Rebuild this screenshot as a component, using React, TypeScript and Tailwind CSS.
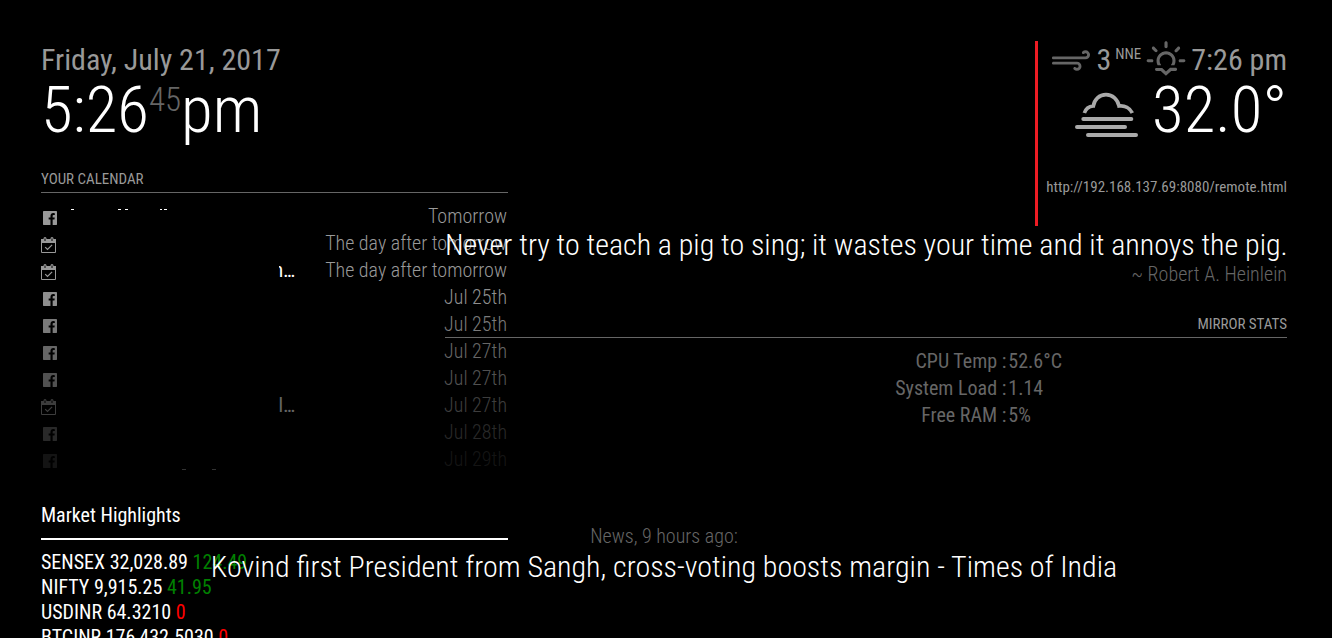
import { WiStrongWind, WiSunset } from 'react-icons/wi'

type CalendarEvent = {
  icon: 'facebook' | 'calendar'
  title: string
  time: string
}

const EVENTS: CalendarEvent[] = [
  { icon: 'facebook', title: '', time: 'Tomorrow' },
  { icon: 'calendar', title: '', time: 'The day after tomorrow' },
  { icon: 'calendar', title: 'n…', time: 'The day after tomorrow' },
  { icon: 'facebook', title: '', time: 'Jul 25th' },
  { icon: 'facebook', title: '', time: 'Jul 25th' },
  { icon: 'facebook', title: '', time: 'Jul 27th' },
  { icon: 'facebook', title: '', time: 'Jul 27th' },
  { icon: 'calendar', title: 'l…', time: 'Jul 27th' },
  { icon: 'facebook', title: '', time: 'Jul 28th' },
  { icon: 'facebook', title: '', time: 'Jul 29th' },
]

const STATS = [
  { label: 'CPU Temp :', value: '52.6°C' },
  { label: 'System Load :', value: '1.14' },
  { label: 'Free RAM :', value: '5%' },
]

const QUOTES = [
  { name: 'SENSEX', price: '32,028.89', change: '124.49', up: true },
  { name: 'NIFTY', price: '9,915.25', change: '41.95', up: true },
  { name: 'USDINR', price: '64.3210', change: '0', up: false },
  { name: 'BTCINR', price: '176,432.5030', change: '0', up: false },
]

// events fade out after the first quarter of the list
function eventOpacity(index: number) {
  const start = EVENTS.length * 0.25
  if (index < start) return 1
  return 1 - (index - start) / (EVENTS.length - start)
}

function FacebookIcon() {
  return (
    <svg viewBox="0 128 1536 1536" className="ml-0.5 size-3.5" fill="currentColor" aria-hidden="true">
      <path d="M1451 128q35 0 60 25t25 60v1366q0 35-25 60t-60 25h-391v-595h199l30-232h-229v-148q0-56 23.5-84t91.5-28l122-1v-207q-63-9-178-9-136 0-217.5 80t-81.5 226v171h-200v232h200v595h-735q-35 0-60-25t-25-60v-1366q0-35 25-60t60-25h1366z" />
    </svg>
  )
}

function CalendarIcon() {
  return (
    <svg viewBox="0 0 15 16" className="h-4 w-[15px]" fill="none" stroke="currentColor" aria-hidden="true">
      <path d="M.5 3v12.5h14V3" />
      <path d="M0 2h15v4H0z" fill="currentColor" stroke="none" />
      <path d="M4 4V1.5M11 4V1.5" strokeWidth="3" strokeLinecap="round" />
      <path d="M4 1.5v2.5M11 1.5v2.5" stroke="#000" />
      <path d="M4.2 10.2l2.3 2.3 4.6-4.6" strokeWidth="1.2" />
    </svg>
  )
}

function FogIcon() {
  return (
    <svg
      viewBox="0 0 216 168"
      className="mt-1.5 h-14 w-[72px] text-[#aaa]"
      fill="none"
      stroke="currentColor"
      aria-hidden="true"
    >
      <path
        d="M43 81C47 69 57 61 70 60C73 40 88 26 108 26C128 26 143 40 147 60C164 58 180 66 187 81"
        strokeWidth="11"
      />
      <path d="M40 99H184M21 123H165M54 147H198" strokeWidth="12" strokeLinecap="round" />
    </svg>
  )
}

function Calendar() {
  return (
    <section className="mt-[29px]">
      <h2 className="border-b border-[#666] pb-[5px] text-[15px] leading-[15px] text-[#999] uppercase">
        Your Calendar
      </h2>
      <div className="relative mt-2.5">
        <table className="w-full border-collapse">
          <tbody>
            {EVENTS.map((event, i) => (
              <tr key={i} className="h-[27px] text-xl leading-[25px]" style={{ opacity: eventOpacity(i) }}>
                <td className="w-6 p-0 pt-0.5 align-middle text-[#999]">
                  {event.icon === 'facebook' ? <FacebookIcon /> : <CalendarIcon />}
                </td>
                <td className="p-0 text-white">
                  <div className="flex w-[230px] justify-end">
                    <span className="flex w-4 justify-end overflow-hidden">{event.title}</span>
                  </div>
                </td>
                <td className="p-0 pr-px text-right font-light whitespace-nowrap text-[#999]">{event.time}</td>
              </tr>
            ))}
          </tbody>
        </table>
        <svg className="absolute top-1.5 left-7 h-px w-28" fill="#fff" aria-hidden="true">
          <path d="M2 0h3v1H2zM49 0h3v1h-3zM56 0h3v1h-3zM91 0h2v1h-2zM95 0h3v1h-3z" />
        </svg>
        <svg className="absolute bottom-[3px] left-[140px] h-px w-10" fill="#333" aria-hidden="true">
          <path d="M1 0h4v1H1zM31 0h4v1h-4z" />
        </svg>
      </div>
    </section>
  )
}

function Market() {
  return (
    <section className="mt-[30px] text-xl leading-[25px] text-white">
      <h2 className="border-b-2 border-white pb-2.5">Market Highlights</h2>
      <ul className="mt-2.5 whitespace-nowrap">
        {QUOTES.map((q) => (
          <li key={q.name}>
            {q.name} {q.price}{' '}
            <span className={q.up ? 'text-[#008000]' : 'text-[#f00]'}>{q.change}</span>
          </li>
        ))}
      </ul>
    </section>
  )
}

function Weather() {
  return (
    <section className="ml-auto h-[185px] w-fit border-l-[3px] border-[#ed1c24] pt-px pl-2 text-right">
      <div className="flex h-[35px] items-center justify-end text-3xl leading-[35px] text-[#999]">
        <WiStrongWind className="size-12 text-[#666]" />
        <span className="ml-px">3</span>
        <sup className="top-0 ml-1 self-start pt-0.5 text-[15px] leading-5">NNE</sup>
        <WiSunset className="ml-px size-12 text-[#666]" />
        <span className="ml-px">7:26 pm</span>
      </div>
      <div className="mt-px flex h-[65px] items-center justify-end text-[65px] leading-[65px] font-light text-white">
        <FogIcon />
        <span className="ml-2.5">32.0°</span>
      </div>
      <div className="mt-[34px] text-[15px] leading-5 text-[#999]">http://192.168.137.69:8080/remote.html</div>
    </section>
  )
}

export default function App() {
  return (
    <main className="relative h-screen overflow-hidden bg-black pt-[41px] pr-[45px] pl-[41px] font-['Roboto_Condensed','Liberation_Sans_Narrow',Roboto,sans-serif]">
      <div className="flex items-start">
        <div className="w-[467px] shrink-0">
          <header className="pt-px">
            <div className="text-3xl leading-[35px] text-[#999]">Friday, July 21, 2017</div>
            <div className="mt-px flex text-[65px] leading-[65px] font-light text-white">
              <span>5:26</span>
              <span className="text-[33px] leading-[44px] text-[#666]">45</span>
              <span>pm</span>
            </div>
          </header>
          <Calendar />
          <Market />
        </div>

        <div className="relative -ml-[63px] min-w-0 flex-1">
          <Weather />
          <section className="mt-px text-right font-light">
            <p className="text-3xl leading-[35px] whitespace-nowrap text-white">
              Never try to teach a pig to sing; it wastes your time and it annoys the pig.
            </p>
            <p className="text-xl leading-[25px] text-[#666]">~ Robert A. Heinlein</p>
          </section>
          <section className="mt-[30px]">
            <h2 className="border-b border-[#666] pb-[5px] text-right text-[15px] leading-[15px] text-[#999] uppercase">
              Mirror Stats
            </h2>
            <table className="mt-2.5 w-full border-collapse text-xl leading-[25px] text-[#666]">
              <tbody>
                {STATS.map((s) => (
                  <tr key={s.label} className="h-[27px]">
                    <th scope="row" className="w-2/3 p-0 text-right font-normal">{s.label}</th>
                    <td className="p-0 pl-0.5">{s.value}</td>
                  </tr>
                ))}
              </tbody>
            </table>
          </section>
        </div>
      </div>

      <section className="absolute right-[45px] bottom-[54px] left-[41px] text-center font-light">
        <p className="text-xl leading-[25px] text-[#666]">News, 9 hours ago:</p>
        <p className="text-3xl leading-[35px] text-white">
          Kovind first President from Sangh, cross-voting boosts margin - Times of India
        </p>
      </section>
    </main>
  )
}
